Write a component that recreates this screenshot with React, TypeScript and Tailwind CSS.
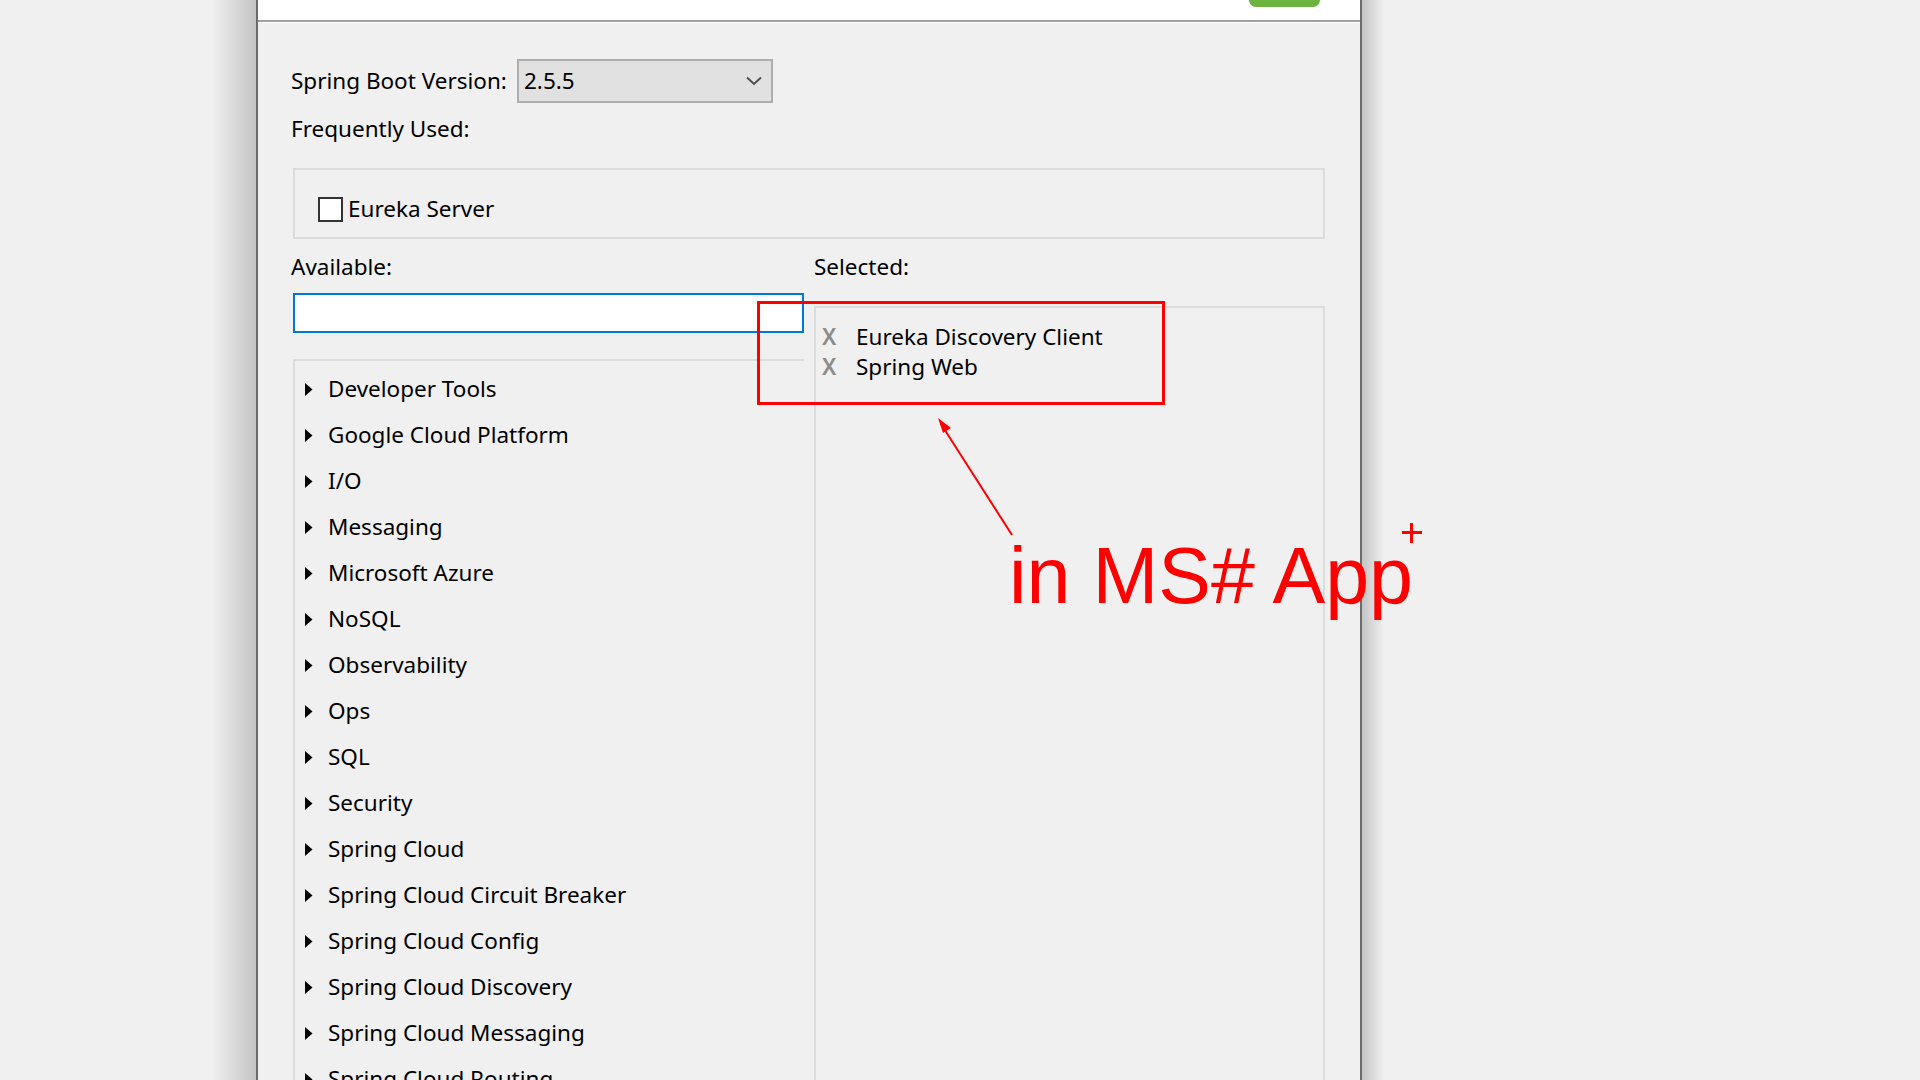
const CATEGORIES = [
  "Developer Tools",
  "Google Cloud Platform",
  "I/O",
  "Messaging",
  "Microsoft Azure",
  "NoSQL",
  "Observability",
  "Ops",
  "SQL",
  "Security",
  "Spring Cloud",
  "Spring Cloud Circuit Breaker",
  "Spring Cloud Config",
  "Spring Cloud Discovery",
  "Spring Cloud Messaging",
  "Spring Cloud Routing",
  "Spring Cloud Tools",
];

const SELECTED = ["Eureka Discovery Client", "Spring Web"];

const UI_FONT = "font-['Noto_Sans',sans-serif]";

function Caret() {
  return (
    <svg width="8" height="13" viewBox="0 0 8 13" className="shrink-0">
      <polygon points="0,0 7.5,6.5 0,13" fill="#000" />
    </svg>
  );
}

function Chevron() {
  return (
    <svg width="16" height="10" viewBox="0 0 16 10">
      <path d="M1 1.5 L8 8 L15 1.5" fill="none" stroke="#505050" strokeWidth="2" />
    </svg>
  );
}

function Annotation() {
  return (
    <>
      <div className="pointer-events-none absolute left-[757px] top-[301px] h-[104px] w-[408px] border-[3px] border-[#ff0000]" />
      <svg
        className="pointer-events-none absolute left-0 top-0"
        width="1920"
        height="1080"
        viewBox="0 0 1920 1080"
      >
        <line x1="1012" y1="535" x2="941" y2="424" stroke="#ff0000" strokeWidth="2" />
        <polygon points="938,418 951,428 943,433" fill="#ff0000" />
      </svg>
      <div className="pointer-events-none absolute left-[1009px] top-[536px] font-['Liberation_Sans',Arial,sans-serif] text-[79px] leading-[79px] whitespace-nowrap text-[#ff0000]">
        in MS# App
      </div>
      <div className="pointer-events-none absolute left-[1402px] top-[523px] h-[20px] w-[20px]">
        <div className="absolute left-0 top-[8px] h-[3px] w-[20px] bg-[#ff0000]" />
        <div className="absolute left-[8px] top-0 h-[20px] w-[3px] bg-[#ff0000]" />
      </div>
    </>
  );
}

export default function App() {
  return (
    <div className={`relative flex h-[1080px] w-[1920px] overflow-hidden bg-[#f0f0f0] ${UI_FONT} text-black`}>
      {/* desktop left of the dialog */}
      <div className="flex w-[256px] shrink-0 justify-end">
        <div className="w-[44px] bg-gradient-to-r from-[#f0f0f0] to-[#c4c4c4]" />
      </div>

      {/* dialog */}
      <div className="flex h-[1080px] w-[1106px] shrink-0 flex-col overflow-hidden border-x-2 border-[#6b6b6b] bg-[#f0f0f0]">
        <div className="flex h-[20px] shrink-0 justify-end bg-white pr-[40px]">
          <div className="h-[7px] w-[71px] rounded-b-[9px] bg-[#6db33f]" />
        </div>
        <div className="h-[2px] shrink-0 bg-[#a0a0a0]" />
        <div className="h-px shrink-0 bg-white" />

        <div className="flex min-h-0 flex-1 flex-col px-[35px] pt-[36px] text-[22.5px]">
          <div className="flex shrink-0 items-center">
            <span className="-ml-[2px] w-[226px]">Spring Boot Version:</span>
            <div className="flex h-[44px] w-[256px] items-center justify-between border-2 border-[#adadad] bg-[#e1e1e1] pl-[5px] pr-[9px]">
              <span>2.5.5</span>
              <Chevron />
            </div>
          </div>

          <div className="-ml-[2px] mt-[11px] h-[30px] shrink-0 leading-[30px]">Frequently Used:</div>

          <div className="mt-[24px] h-[71px] shrink-0 border-2 border-[#dcdcdc] pl-[23px] pt-[26px]">
            <label className="flex items-center gap-[5px] leading-[26px]">
              <span className="h-[25px] w-[25px] border-2 border-[#333] bg-white" />
              <span>Eureka Server</span>
            </label>
          </div>

          <div className="mt-[13px] grid min-h-0 flex-1 grid-cols-2 gap-x-[10px]">
            <div className="flex min-h-0 flex-col">
              <div className="-ml-[2px] h-[30px] shrink-0 leading-[30px]">Available:</div>
              <div className="mt-[11px] h-[40px] shrink-0 border-2 border-[#0078d7] bg-white" />
              <div className="mt-[26px] min-h-0 flex-1 overflow-hidden border-l-2 border-t-2 border-[#dcdcdc] pt-[5px]">
                {CATEGORIES.map((c) => (
                  <div key={c} className="flex h-[46px] items-center gap-[15px] pl-[10px]">
                    <Caret />
                    <span className="whitespace-nowrap">{c}</span>
                  </div>
                ))}
              </div>
            </div>

            <div className="flex min-h-0 flex-col">
              <div className="h-[30px] shrink-0 leading-[30px]">Selected:</div>
              <div className="mt-[24px] min-h-0 flex-1 border-2 border-b-0 border-[#dcdcdc] pt-[14px]">
                {SELECTED.map((s) => (
                  <div key={s} className="flex h-[30px] items-center pl-[6px]">
                    <span className="w-[34px] font-semibold text-[#8c8c8c]">X</span>
                    <span className="whitespace-nowrap">{s}</span>
                  </div>
                ))}
              </div>
            </div>
          </div>
        </div>
      </div>

      {/* desktop right of the dialog */}
      <div className="w-[22px] shrink-0 bg-gradient-to-r from-[#c4c4c4] to-[#f0f0f0]" />
      <div className="flex-1" />

      <Annotation />
    </div>
  );
}
